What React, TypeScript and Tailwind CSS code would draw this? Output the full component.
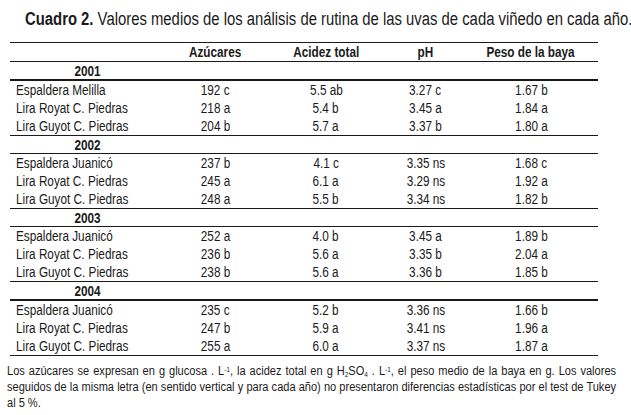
const font = { fontFamily: '"Liberation Sans", Arial, sans-serif' };

type Row = [string, string, string, string, string];

const years: { year: string; rows: Row[]; thick: boolean }[] = [
  {
    year: "2001",
    thick: true,
    rows: [
      ["Espaldera Melilla", "192 c", "5.5 ab", "3.27 c", "1.67 b"],
      ["Lira Royat C. Piedras", "218 a", "5.4 b", "3.45 a", "1.84 a"],
      ["Lira Guyot C. Piedras", "204 b", "5.7 a", "3.37 b", "1.80 a"],
    ],
  },
  {
    year: "2002",
    thick: false,
    rows: [
      ["Espaldera Juanicó", "237 b", "4.1 c", "3.35 ns", "1.68 c"],
      ["Lira Royat C. Piedras", "245 a", "6.1 a", "3.29 ns", "1.92 a"],
      ["Lira Guyot C. Piedras", "248 a", "5.5 b", "3.34 ns", "1.82 b"],
    ],
  },
  {
    year: "2003",
    thick: false,
    rows: [
      ["Espaldera Juanicó", "252 a", "4.0 b", "3.45 a", "1.89 b"],
      ["Lira Royat C. Piedras", "236 b", "5.6 a", "3.35 b", "2.04 a"],
      ["Lira Guyot C. Piedras", "238 b", "5.6 a", "3.36 b", "1.85 b"],
    ],
  },
  {
    year: "2004",
    thick: true,
    rows: [
      ["Espaldera Juanicó", "235 c", "5.2 b", "3.36 ns", "1.66 b"],
      ["Lira Royat C. Piedras", "247 b", "5.9 a", "3.41 ns", "1.96 a"],
      ["Lira Guyot C. Piedras", "255 a", "6.0 a", "3.37 ns", "1.87 a"],
    ],
  },
];

const cols = "grid grid-cols-[156px_99px_122px_77px_134px]";

// narrow look (Arial Narrow is not installed)
const N = ({ children, left }: { children: React.ReactNode; left?: boolean }) => (
  <span className={`inline-block whitespace-nowrap scale-x-[0.84] ${left ? "origin-left" : "origin-center"}`}>
    {children}
  </span>
);

const App = () => {
  return (
    <div className="w-[631px] h-[415px] bg-white text-[#1a1a1a] overflow-hidden" style={font}>
      {/* title */}
      <div className="pl-[25px] pt-[8px] h-[42px] text-[18px] leading-[22px]">
        <span className="inline-block whitespace-nowrap origin-left scale-x-[0.825]">
          <span className="font-bold">Cuadro 2.</span> Valores medios de los análisis de rutina de las uvas de cada
          viñedo en cada año.
        </span>
      </div>

      {/* table */}
      <div className="ml-[10px] w-[588px] text-[14px]">
        <div className="h-px bg-[#1a1a1a]" />
        <div className={`${cols} h-[18px] leading-[18px] font-bold text-center`}>
          <div />
          <div><N>Azúcares</N></div>
          <div><N>Acidez total</N></div>
          <div><N>pH</N></div>
          <div><N>Peso de la baya</N></div>
        </div>
        <div className="h-px bg-[#1a1a1a]" />

        {years.map((y) => (
          <div key={y.year}>
            <div className={`${cols} h-[17px] leading-[18px] font-bold`}>
              <div className="text-center"><N>{y.year}</N></div>
            </div>
            <div className={y.thick ? "h-[2px] bg-[#1a1a1a]" : "h-px bg-[#1a1a1a]"} />
            {y.rows.map((r, i) => (
              <div key={i} className={`${cols} h-[18px] leading-[18px] text-center`}>
                <div className="text-left pl-[6px]"><N left>{r[0]}</N></div>
                <div><N>{r[1]}</N></div>
                <div><N>{r[2]}</N></div>
                <div><N>{r[3]}</N></div>
                <div><N>{r[4]}</N></div>
              </div>
            ))}
            <div className="h-px bg-[#1a1a1a]" />
          </div>
        ))}
      </div>

      {/* footnote */}
      <div className="pl-[7px] pt-[7px] text-[12px] leading-[16px]">
        <div className="w-[662px] origin-left scale-x-[0.92]">
          <div className="text-justify [text-align-last:justify]">
            Los azúcares se expresan en g glucosa . L<sup className="text-[7px]">-1</sup>, la acidez total en g H
            <sub className="text-[7px]">2</sub>SO<sub className="text-[7px]">4</sub> . L
            <sup className="text-[7px]">-1</sup>, el peso medio de la baya en g. Los valores
          </div>
          <div className="text-justify [text-align-last:justify]">
            seguidos de la misma letra (en sentido vertical y para cada año) no presentaron diferencias estadísticas
            por el test de Tukey
          </div>
          <div>al 5 %.</div>
        </div>
      </div>
    </div>
  );
};

export default App;
